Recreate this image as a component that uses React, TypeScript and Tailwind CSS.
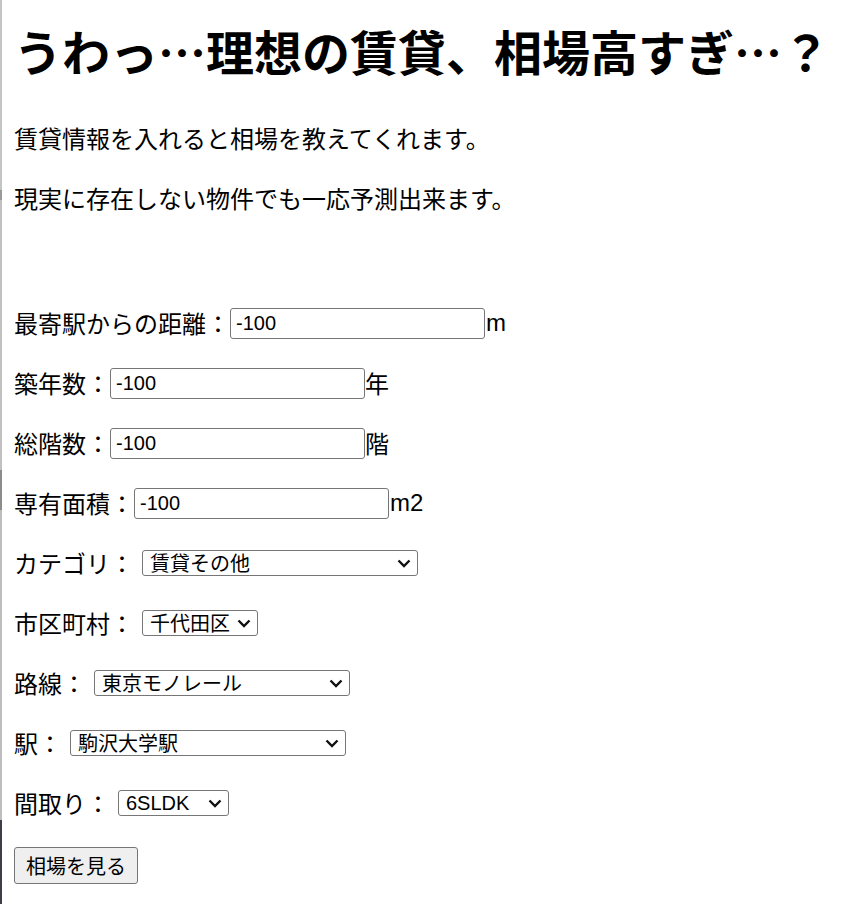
import React from "react";

const Chevron = () => (
  <svg width="14" height="9" viewBox="0 0 14 9" className="pointer-events-none absolute right-[7px] top-[9px]">
    <polyline points="1.5,1.5 7,7 12.5,1.5" fill="none" stroke="#111" strokeWidth="2.4" />
  </svg>
);

const jp = { fontFamily: '"Noto Sans CJK JP", "Liberation Sans", sans-serif' };
const lat = { fontFamily: '"Liberation Sans", Arial, sans-serif' };

function Sel({ value, width, latin }: { value: string; width: string; latin?: boolean }) {
  return (
    <div className={`relative ml-[8px] h-[26px] shrink-0 ${width}`}>
      <select
        defaultValue={value}
        className="block h-[26px] w-full appearance-none rounded-[3px] border border-[#767676] bg-white py-0 pl-[7px] pr-[24px] text-[20px] leading-[24px] text-black outline-none"
        style={latin ? lat : jp}
      >
        <option>{value}</option>
      </select>
      <Chevron />
    </div>
  );
}

function Inp({ width }: { width: string }) {
  return (
    <input
      defaultValue="-100"
      className={`block h-[31px] shrink-0 ${width} rounded-[3px] border border-[#767676] bg-white pl-[5px] text-[20px] text-black outline-none`}
      style={lat}
    />
  );
}

export default function App() {
  return (
    <div lang="ja" className="flex min-h-[904px] bg-white text-black" style={jp}>
      <div className="flex w-[2px] shrink-0 flex-col">
        <div className="h-[190px] bg-[#c4c4c4]" />
        <div className="h-[10px] bg-[#9a9a9a]" />
        <div className="h-[270px] bg-[#c0c0c0]" />
        <div className="h-[40px] bg-[#8c8c8c]" />
        <div className="h-[310px] bg-[#bdbdbd]" />
        <div className="flex-1 bg-[#3e3e4a]" />
      </div>
      <div className="flex flex-col pl-[12px] pt-[14px]">
        <h1 className="text-[48px] font-bold leading-[72px]" style={jp}>
          うわっ…理想の賃貸、相場高すぎ…？
        </h1>
        <p className="mt-[34px] text-[24px] leading-[36px]">賃貸情報を入れると相場を教えてくれます。</p>
        <p className="mt-[24px] text-[24px] leading-[36px]">現実に存在しない物件でも一応予測出来ます。</p>

        <div className="mt-[89px] flex h-[36px] items-center text-[24px]">
          <span>最寄駅からの距離：</span>
          <Inp width="w-[255px]" />
          <span className="ml-[1px]" style={lat}>m</span>
        </div>
        <div className="mt-[24px] flex h-[36px] items-center text-[24px]">
          <span>築年数：</span>
          <Inp width="w-[255px]" />
          <span>年</span>
        </div>
        <div className="mt-[24px] flex h-[36px] items-center text-[24px]">
          <span>総階数：</span>
          <Inp width="w-[255px]" />
          <span>階</span>
        </div>
        <div className="mt-[24px] flex h-[36px] items-center text-[24px]">
          <span>専有面積：</span>
          <Inp width="w-[255px]" />
          <span className="ml-[1px]" style={lat}>m2</span>
        </div>
        <div className="mt-[24px] flex h-[36px] items-center text-[24px]">
          <span>カテゴリ：</span>
          <Sel value="賃貸その他" width="w-[276px]" />
        </div>
        <div className="mt-[24px] flex h-[36px] items-center text-[24px]">
          <span>市区町村：</span>
          <Sel value="千代田区" width="w-[116px]" />
        </div>
        <div className="mt-[24px] flex h-[36px] items-center text-[24px]">
          <span>路線：</span>
          <Sel value="東京モノレール" width="w-[256px]" />
        </div>
        <div className="mt-[24px] flex h-[36px] items-center text-[24px]">
          <span>駅：</span>
          <Sel value="駒沢大学駅" width="w-[276px]" />
        </div>
        <div className="mt-[24px] flex h-[36px] items-center text-[24px]">
          <span>間取り：</span>
          <Sel value="6SLDK" width="w-[111px]" latin />
        </div>
        <div className="mt-[26px]">
          <button
            className="h-[37px] w-[124px] rounded-[3px] border border-[#767676] bg-[#efefef] text-[20px] leading-[24px] text-black"
            style={jp}
          >
            相場を見る
          </button>
        </div>
      </div>
    </div>
  );
}
